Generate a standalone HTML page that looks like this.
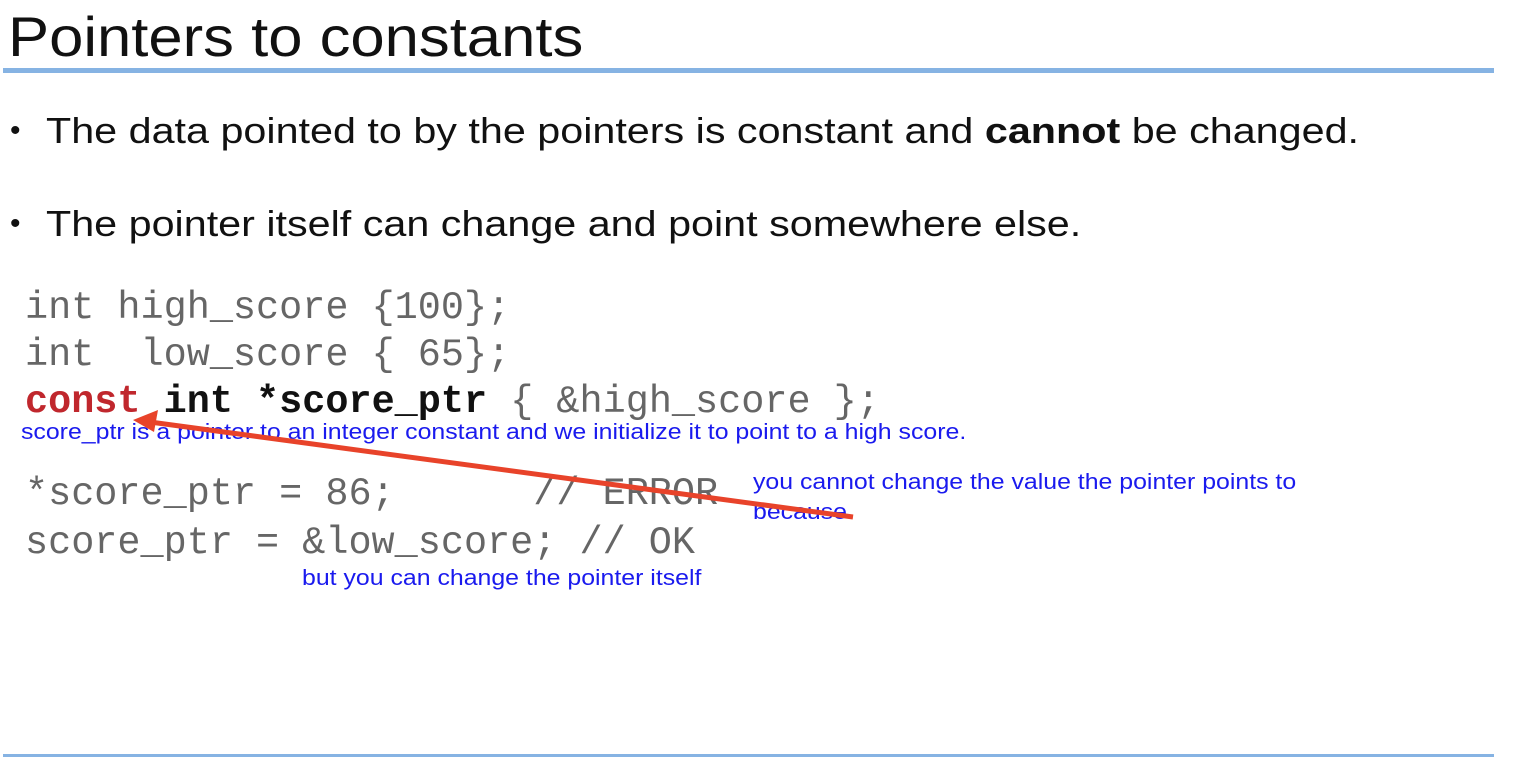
<!DOCTYPE html>
<html><head><style>
body{margin:0;width:1526px;height:758px;background:#fff;position:relative;overflow:hidden;font-family:"Liberation Sans",sans-serif}
.a{position:absolute;white-space:pre;transform-origin:0 0}
.t{left:8px;top:4px;font-size:56px;color:#111;transform:scaleX(1.1)}
.b{font-size:36px;color:#111;left:46px;transform:scaleX(1.147)}
.d{font-size:30px;left:10px;color:#111}
.c{font-family:"Liberation Mono",monospace;font-size:38.5px;color:#666;left:25px}
.n{color:#1a1aee;font-size:22px;transform:scaleX(1.13)}
.line{position:absolute;left:3px;width:1491px;background:#86b3e3}
</style></head><body>
<div class="a t">Pointers to constants</div>
<div class="line" style="top:68px;height:5px"></div>
<div class="a d" style="top:114px">•</div>
<div class="a b" style="top:110px">The data pointed to by the pointers is constant and <b>cannot</b> be changed.</div>
<div class="a d" style="top:207px">•</div>
<div class="a b" style="top:203px">The pointer itself can change and point somewhere else.</div>
<div class="a c" style="top:286px">int high_score {100};</div>
<div class="a c" style="top:333px">int  low_score { 65};</div>
<div class="a c" style="top:380px"><b style="color:#c0272d">const</b> <b style="color:#111">int *score_ptr</b> { &amp;high_score };</div>
<div class="a c" style="top:472px">*score_ptr = 86;      // ERROR</div>
<div class="a c" style="top:521px">score_ptr = &amp;low_score; // OK</div>
<div class="a n" style="left:21px;top:419px">score_ptr is a pointer to an integer constant and we initialize it to point to a high score.</div>
<div class="a n" style="left:753px;top:469px">you cannot change the value the pointer points to</div>
<div class="a n" style="left:753px;top:499px">because</div>
<div class="a n" style="left:302px;top:565px">but you can change the pointer itself</div>
<svg style="position:absolute;left:0;top:0" width="1526" height="758">
<line x1="853" y1="517" x2="150" y2="422" stroke="#e8432a" stroke-width="5"/>
<polygon points="133,420 158,410 154,432" fill="#e8432a"/>
</svg>
<div class="line" style="top:754px;height:3px"></div>
</body></html>
